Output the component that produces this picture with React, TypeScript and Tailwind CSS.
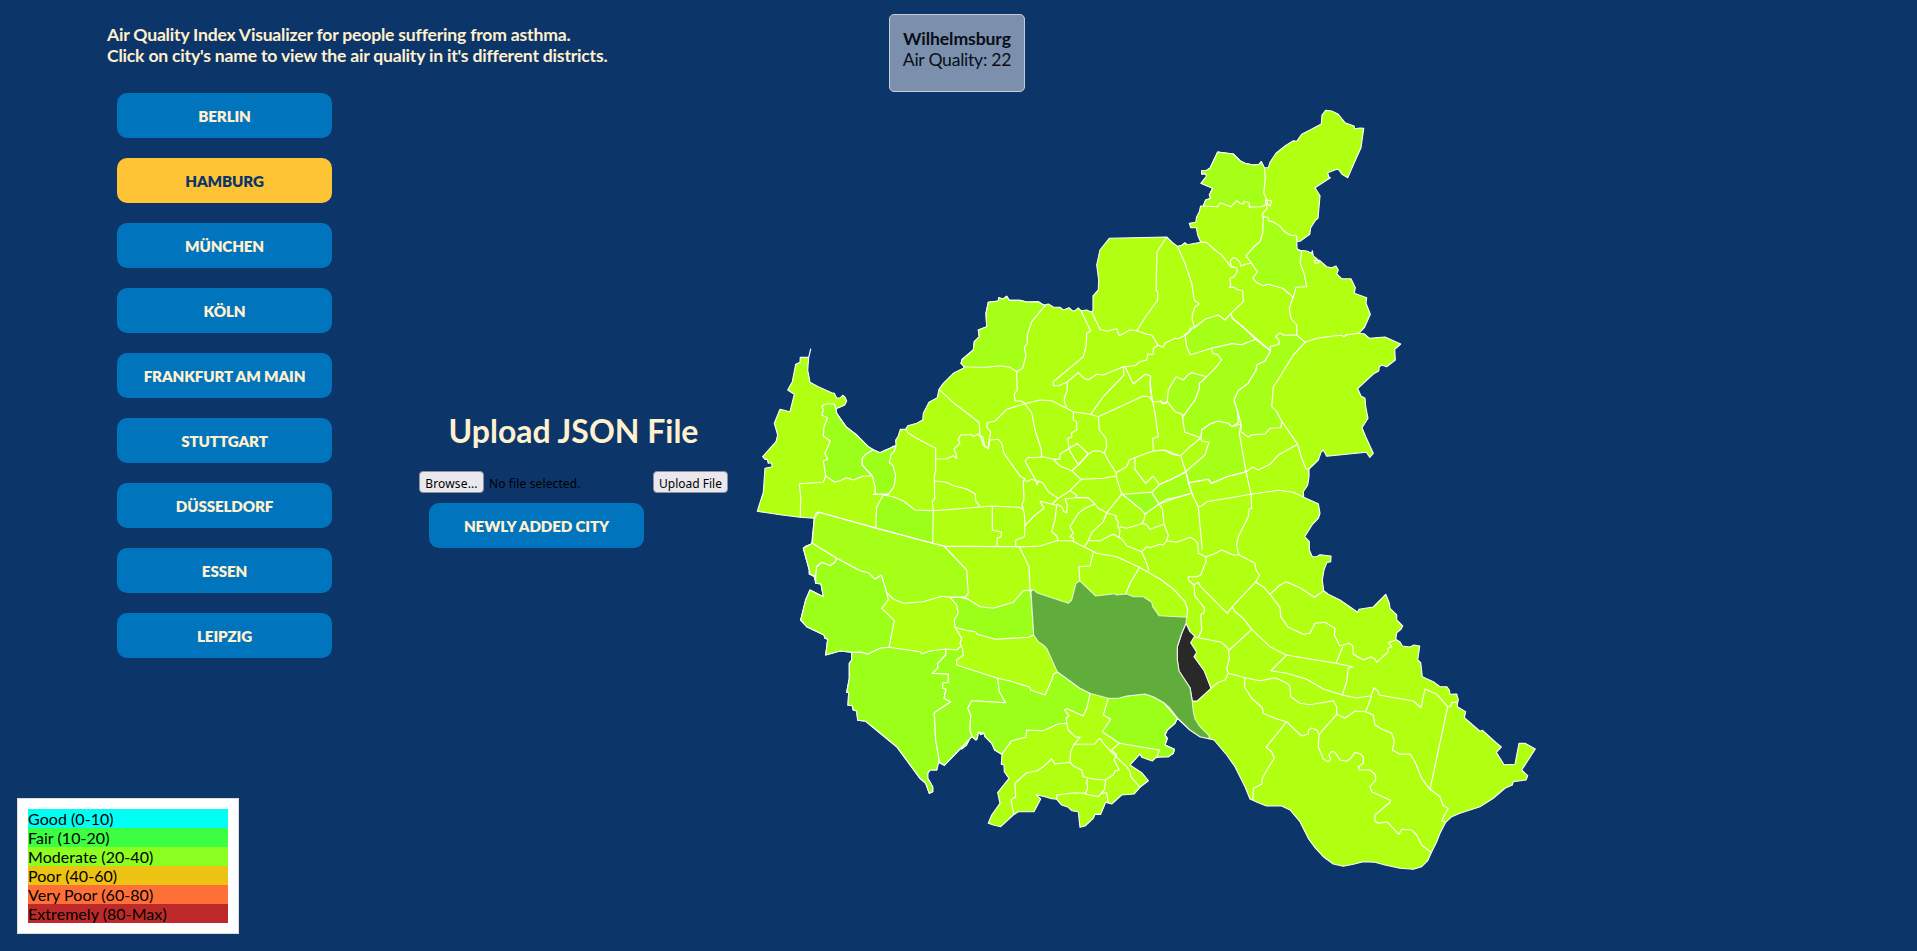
import React, { useState } from "react";

const CITIES = [
  "BERLIN",
  "HAMBURG",
  "MÜNCHEN",
  "KÖLN",
  "FRANKFURT AM MAIN",
  "STUTTGART",
  "DÜSSELDORF",
  "ESSEN",
  "LEIPZIG",
];

const LEGEND = [
  { label: "Good (0-10)", color: "bg-[#00fff2]" },
  { label: "Fair (10-20)", color: "bg-[#3cff43]" },
  { label: "Moderate (20-40)", color: "bg-[#8bff22]" },
  { label: "Poor (40-60)", color: "bg-[#ecc313]" },
  { label: "Very Poor (60-80)", color: "bg-[#ff6f38]" },
  { label: "Extremely (80-Max)", color: "bg-[#bd2a29]" },
];

type Run = [number, number, string];

// Each run holds an origin and points measured in thirds of a map unit.
const points = ([ox, oy, run]: Run) =>
  run
    .trim()
    .split(/\s+/)
    .map((pair) => {
      const [x, y] = pair.split(",").map(Number);
      return `${(ox + x / 3).toFixed(1)},${(oy + y / 3).toFixed(1)}`;
    })
    .join(" ");

const COAST: Run[] = [
  [740, 330, "206,82 212,57 206,82 203,120 210,157 235,170 275,188 283,190 290,204 300,204 308,196 315,202 320,213 314,225 303,230 288,236 290,250 300,265 318,290 335,304 350,315 365,333 385,350 400,359 420,368 435,361 450,355 462,348 468,347 467,330 475,318 481,298 498,298 503,287 530,280 548,270 550,250 567,217 592,203 597,178"],
  [920, 220, "70,490 100,460 130,445 133,440 123,430 127,418 160,390 163,365 178,350 175,330 200,320 198,280 205,247 235,243 236,233 250,237 260,229 268,241 300,241 320,246 355,245 370,256 385,252 400,261 420,262 430,270 447,263 457,272 465,272 475,264 483,272 500,270 512,275 519,272 519,228 535,210 536,180 530,135 540,90 568,55 740,51"],
  [1160, 100, "40,430 52,439 65,436 75,428 82,434 122,427 113,405 109,383 92,383 88,370 107,367 110,350 118,335 122,318 130,318 137,300 152,295 148,285 158,265 123,250 140,228 136,221 125,222 125,212 140,211 150,205 173,156 220,162 240,182 255,190 280,195 297,193 304,185 313,203 325,203 330,187 348,160 375,138 400,122 410,124 425,103 450,90 484,72 486,45 497,31 515,33 535,43 555,68 582,78 584,86 600,84 611,85 603,143 584,185 563,233 545,222 537,210 530,208 503,218 506,230 511,233 465,263 480,287 474,355 467,360 452,383 449,403 420,424 405,425 403,430 411,447 420,451 440,453 455,460 457,452 460,468 472,478 477,488 466,490 462,480 478,481 500,500 515,503 528,498 535,510 530,522 545,536 573,536 586,563 583,580 620,593 618,610 631,643 613,683 597,700"],
  [1160, 300, "612,101 628,115 675,111 722,132 704,148 706,180 680,200 665,195 658,200 656,213 640,222 593,266 603,288 615,295 617,320 624,355 606,383 617,410 640,460 629,472 619,457 500,469 490,450 483,457 475,480 447,507 447,530 443,555 430,575 431,592 475,611 480,640 475,655 458,672 434,710 448,725 448,750"],
  [1200, 540, "328,30 337,50 350,50 360,44 393,48 392,65 380,68 372,90 367,120 371,152 385,163 420,180 473,217 477,208 520,201 557,163 568,190 570,205 590,225 590,240 608,258 603,268 590,278 587,298 600,306 607,318 630,321 642,315 659,318 653,360 662,368 667,410 700,425 720,440 740,440 748,450 750,463 770,462 775,480 773,487 772,500 797,515 793,533 840,574 847,571 885,605 904,621 889,637 912,674 945,673 957,610 975,610 1006,627 965,690 983,707 978,720 940,725 937,735 915,745 880,775 840,800 780,820 755,830 737,847 720,880 710,905 693,940 683,962 665,980 640,988 600,985 555,975 525,967 490,965 460,973 430,979 400,972 370,950 345,923 325,895 300,845 270,810 245,798 200,798 175,788 150,777 135,740 105,680 80,645 42,600"],
  [960, 570, "747,506 720,500 690,480 652,445 645,460 622,480 615,495 622,505 615,525 643,538 640,550 625,560 597,560 585,565 577,573 545,562 540,552 510,585 545,608 565,632 540,652 522,672 485,675 455,702 437,697 422,733 405,733 400,745 375,768 360,772 355,725 335,722 325,712 305,705 290,688 275,686 255,680 228,674 242,687 222,725 175,725 160,735 122,770 103,766 85,760 95,735 120,700 113,668 147,625 133,605 132,585 124,583 126,553 104,540 95,520 75,500 72,490 62,494 55,486 52,505 48,510 37,500 30,505 20,525 5,537"],
  [780, 500, "540,747 493,796 480,790 472,783 470,810 450,810 443,820 443,835 458,860 458,875 448,880 437,850 420,835 350,740 257,664 233,661 230,633 220,630 217,617 204,616 206,578 200,577 208,535 208,490 215,480 215,457 180,453 137,465 143,418 135,415 132,405 80,380 62,360 77,300 90,270 130,290 123,252 107,250 103,230 88,222 88,210 70,145 78,138 95,132 103,55 60,52 0,44"],
  [740, 330, "52,544 70,487 75,415 97,410 94,398 85,400 82,388 75,388 68,380 108,335 113,315 103,280 120,238 150,245 163,193 143,180 157,155 167,103 180,97 181,82"],
];

const MID = "#a6ff17";
const LOW = "#9bff1a";

const DISTRICTS: { fill: string; run: Run }[] = [
  { fill: LOW, run: [740, 330, "245,228 260,221 283,222 288,236 290,250 318,290 350,315 385,350 400,359 375,375 367,385 367,405 385,425 397,438 370,438 340,450 320,443 300,452 283,456 257,437 250,393 263,388 255,370 271,333 250,318 252,290 262,265 257,260 246,256 250,238"] },
  { fill: LOW, run: [740, 330, "400,359 375,375 367,385 367,405 397,438 405,470 406,493 445,493 462,470 467,437 458,405 448,398 453,375 462,365 468,347 450,355 420,368"] },
  { fill: LOW, run: [740, 330, "430,495 410,530 407,595 578,640 580,542 525,540 490,513 460,500"] },
  { fill: MID, run: [920, 220, "375,257 335,305 322,345 322,370 313,382 318,405 308,445 290,455 270,442 240,437 200,442 150,441 133,440 123,430 127,418 160,390 163,365 178,350 175,330 200,320 198,280 205,247 235,243 236,233 250,237 260,229 268,241 300,241 320,246 355,245"] },
  { fill: MID, run: [1160, 100, "130,318 137,300 152,295 148,285 158,265 123,250 140,228 136,221 125,222 125,212 140,211 150,205 173,156 220,162 240,182 255,190 280,195 297,193 304,185 313,203 316,235 311,280 322,302 322,312 305,320 268,322 268,308 252,304 250,312 240,310 230,302 213,320 180,308 173,320"] },
  { fill: MID, run: [1160, 100, "310,350 325,352 325,362 340,366 360,378 370,392 390,405 410,408 411,447 425,455 420,490 432,520 440,560 408,562 400,592 368,565 325,553 310,557 290,548 279,535 292,515 275,490 258,468 285,437 300,425 308,400"] },
  { fill: MID, run: [1160, 300, "75,103 88,97 90,85 103,83 135,58 175,45 195,60 213,40 217,55 250,82 287,118 245,134 215,131 155,145 91,164 80,140"] },
  { fill: MID, run: [1160, 300, "155,145 215,131 245,134 287,118 332,153 315,183 290,195 288,212 270,240 265,250 235,272 222,300 232,330 235,368 215,380 205,370 175,364 150,372 125,390 123,413 75,397 70,370 68,350 105,300 118,265 118,250 140,230 165,205 185,180 175,165 158,160"] },
  { fill: MID, run: [1160, 300, "332,153 330,140 357,133 357,120 347,110 360,98 372,106 410,105 435,127 400,165 340,262 335,320 350,335 366,365 362,383 330,385 315,402 275,404 265,412 243,395 243,372 232,330 222,300 235,272 265,250 270,240 288,212 290,195 315,183"] },
  { fill: MID, run: [1160, 300, "140,230 95,218 85,224 70,240 48,230 25,270 22,305 45,335 65,342 68,350 105,300 118,265 118,250"] },
  { fill: MID, run: [1160, 300, "123,413 125,390 150,372 175,364 205,370 215,380 243,372 238,400 258,515 200,530 155,550 145,538 85,548 77,515 100,495 135,465 147,427 125,423"] },
  { fill: LOW, run: [960, 380, "487,343 575,337 597,372 555,402 545,390"] },
  { fill: MID, run: [960, 380, "575,337 600,313 655,288 678,275 695,340 650,353 597,372"] },
  { fill: MID, run: [780, 500, "117,37 457,130 492,138 560,210 565,280 555,292 510,292 485,289 430,305 370,310 340,297 320,278 304,226 285,238 265,218 240,212 170,175 97,130 103,55"] },
  { fill: MID, run: [780, 500, "97,130 170,175 165,187 150,197 125,187 110,200 107,228 88,222 88,210 70,145"] },
  { fill: LOW, run: [780, 500, "170,175 240,212 265,218 285,238 304,226 320,278 325,300 305,325 343,362 327,442 300,445 263,463 245,457 215,457 180,453 137,465 143,418 135,415 132,405 80,380 62,360 77,300 90,270 130,290 123,252 107,250 107,228 110,200 125,187 150,197 165,187"] },
  { fill: LOW, run: [780, 500, "215,457 245,457 263,463 300,445 327,442 420,455 425,462 450,453 497,447 497,465 473,490 473,505 457,520 505,522 505,547 488,550 488,565 498,567 492,595 512,605 463,638 467,720 478,780 470,810 450,810 443,820 443,835 458,860 458,875 448,880 437,850 420,835 350,740 257,664 233,661 230,633 220,630 217,617 204,616 206,578 200,577 208,535 208,490 215,480"] },
  { fill: LOW, run: [780, 500, "497,447 530,450 542,438 547,445 550,465 530,480 530,495 653,535 660,575 677,608 575,602 563,625 572,645 570,690 576,710 540,747 493,796 478,785 467,720 463,638 512,605 492,595 498,567 488,565 488,550 505,547 505,522 457,520 473,505 473,490 497,465"] },
  { fill: LOW, run: [780, 500, "510,292 555,292 600,320 640,325 700,307 730,272 755,270 756,330 762,405 745,412 645,418 590,402 588,396 555,390 525,382 523,360 535,340 530,315"] },
  { fill: LOW, run: [960, 570, "292,305 360,355 390,370 382,410 370,438 322,416 313,420 327,437 318,445 320,460 295,462 250,482 200,480 197,502 155,512 125,553 104,540 95,520 75,500 72,490 55,486 52,505 48,510 37,500 30,480 32,435 23,415 35,392 137,398 118,365 113,325 150,333 210,352 212,360 255,375 275,330 280,313"] },
  { fill: LOW, run: [960, 570, "445,385 500,378 555,372 580,380 610,397 652,445 645,460 622,480 615,495 622,505 615,525 643,538 640,550 625,560 590,562 598,540 478,520 427,485 452,448 430,435"] },
];

const BORDERS: Run[] = [
  [740, 330, "257,437 250,457 178,461 182,500 181,560"],
  [740, 330, "222,565 228,550 235,546 407,595 578,640 615,649 660,649"],
  [740, 330, "498,292 503,308 530,325 587,355 587,420 583,440 584,505 577,515 580,542 660,536"],
  [740, 330, "587,387 620,386 640,377 650,385 648,372 642,357 660,340 655,330 662,314 695,314 700,320 715,312 720,320"],
  [740, 330, "597,178 640,218 680,248 718,278 720,315 730,345 745,357 747,330"],
  [740, 330, "585,453 620,457 640,467 680,477 706,492 708,515 720,529"],
  [740, 330, "398,493 430,493 445,493"],
  [920, 220, "290,455 290,475 292,510 283,522 285,543 303,543 318,552"],
  [920, 220, "483,272 512,333 500,340 498,380 490,410 400,485 400,497 415,497 440,487 475,458 490,473 505,480 530,463 550,465 610,440 645,437 660,425 680,420 683,402 700,403 700,385 715,375"],
  [920, 220, "515,276 540,328 560,334 590,326 598,347 630,330 650,332"],
  [920, 220, "740,51 711,95 708,210 713,215 713,240 680,285 650,332 680,343 695,345 700,352 713,375 730,382 735,370 765,355 775,356 797,345 820,322"],
  [920, 220, "442,487 442,510 433,535 433,545 440,562"],
  [920, 220, "610,440 612,465 550,530 512,583"],
  [920, 220, "615,440 640,492 675,463 692,468 690,500 697,540"],
  [920, 220, "772,79 795,130 815,190 823,240 838,252 825,260 817,285 817,300 824,324"],
  [1160, 100, "322,312 330,318 335,302 316,300 322,325 308,340 308,352"],
  [1160, 100, "122,427 140,427 165,450 185,465 212,500 222,500"],
  [1160, 100, "215,497 210,485 218,473 228,475 240,487 242,499 255,493 275,490"],
  [1160, 100, "212,500 230,503 232,515 222,530 210,535 212,555 208,562 222,562 230,568 248,572 250,605 213,640"],
  [1160, 100, "213,640 217,655 250,682 332,753"],
  [1160, 100, "400,590 388,625 393,655 410,675 410,705"],
  [1160, 100, "435,727 470,715 520,708 545,706 552,710 560,704 597,700"],
  [1160, 300, "366,365 413,433 425,475 437,505 447,510"],
  [1160, 300, "258,515 273,583 275,625 267,627 265,650 235,710 230,735 233,750"],
  [1160, 300, "0,300 5,310 22,305"],
  [1160, 300, "123,413 90,440 62,467"],
  [1160, 300, "77,515 30,540 0,552"],
  [1160, 300, "0,450 20,453 35,463 62,467 77,515 85,548 100,590 115,620 127,750"],
  [1160, 300, "85,548 145,538 155,550 200,530 258,515 278,502 295,510 330,493 355,465 413,433"],
  [1160, 300, "115,620 125,618 140,605 273,583 355,571 400,577 431,592"],
  [1160, 300, "95,580 50,592 20,598 0,610"],
  [960, 380, "87,180 92,155 80,142 82,128 105,123 140,88 200,70 240,60 275,62 340,95 390,103 415,110 550,48 568,50 578,65"],
  [960, 380, "58,165 68,170 75,200 85,205 90,180 115,178 125,190 132,220 180,288 195,297 190,302"],
  [960, 380, "195,72 215,98 225,150 243,205 245,230"],
  [960, 380, "195,243 205,232 225,233 250,230 280,238 300,238 300,222 325,207 352,190 385,222 355,255"],
  [960, 380, "340,95 340,120 350,125 350,150 335,158 335,172 323,175 328,210 355,255"],
  [960, 380, "280,238 300,258 335,272 355,255 385,222 400,213 420,213 433,220"],
  [960, 380, "415,108 418,150 438,175 440,200 433,220 450,250 468,278 470,295 485,343 440,398"],
  [960, 380, "335,272 363,298 430,295 468,288"],
  [960, 380, "195,243 227,300 232,315 235,303 250,310 265,335 295,355"],
  [960, 380, "363,298 330,332 295,355 275,373 240,363 252,385 225,405 195,437"],
  [960, 380, "190,302 205,303 215,298 230,303"],
  [960, 380, "190,302 192,360 186,375 193,400 195,437 193,470 167,480 167,500"],
  [960, 380, "0,386 50,382 100,378 175,382 188,388"],
  [960, 380, "97,382 97,450 125,457 122,470 112,475 110,500"],
  [960, 380, "330,332 350,345 348,352 385,353"],
  [960, 380, "275,373 290,376 285,420 275,455 290,468 295,482"],
  [960, 380, "290,372 305,380 312,395 320,398 322,375 315,357 345,353 385,353 405,372 415,385 440,398 470,408 467,415 475,425 473,440 480,450 478,472"],
  [960, 380, "405,372 375,385 355,400 330,440 340,460 330,470 340,473 340,485"],
  [960, 380, "440,398 430,425 395,458 385,482"],
  [960, 380, "0,499 200,500 240,498 290,482 335,482 372,500 410,520 470,530 535,560 600,597 640,627 675,665 683,690 680,712"],
  [960, 380, "372,502 385,482 420,482 460,463 485,477 500,497 545,515"],
  [960, 380, "478,440 500,445 550,430 560,435 570,448 612,433"],
  [960, 380, "545,515 560,550 567,572"],
  [960, 380, "545,515 560,500 570,503 600,493 610,495 620,482 625,465 612,433 607,385 597,372"],
  [960, 380, "555,402 552,420 545,430"],
  [960, 380, "468,278 500,260 508,240 545,225 580,213 615,210 660,228"],
  [960, 380, "525,235 525,268 557,310 580,288 597,313"],
  [960, 380, "570,0 575,50 585,100 595,170 578,175 580,212"],
  [960, 380, "578,65 605,65 610,72 622,68"],
  [960, 380, "620,482 650,487 690,472 705,480 713,490 715,520 738,530 738,545 722,585 710,590 685,590 685,600 702,615 705,650 715,660 733,683 733,697 722,705 725,750 715,773"],
  [960, 380, "702,615 715,607 722,620 802,700"],
  [960, 380, "178,500 207,560 210,630 215,660"],
  [960, 380, "400,517 390,558 357,560 359,603"],
  [960, 380, "540,560 510,610 498,640 497,652"],
  [960, 570, "704,200 715,203 785,217 805,237 808,265 800,297 805,310 795,330 775,337 753,355"],
  [960, 570, "697,395 712,393"],
  [960, 570, "320,460 325,480 345,500 360,502 342,523 332,545 330,577"],
  [960, 570, "342,523 405,522 413,510 420,505 430,520 470,562 500,590 510,605 512,620 540,652"],
  [960, 570, "478,520 455,540 470,555 462,570 478,600 465,602 460,615 435,630 400,627 370,620 365,600 340,588 330,577"],
  [960, 570, "437,628 433,660 415,680 375,672 383,655 380,635 383,625"],
  [960, 570, "415,680 425,670 440,668 445,700"],
  [960, 570, "330,577 285,582 275,567 250,590 230,603 200,608 165,640 167,680 153,690 162,735"],
  [960, 570, "290,688 290,675 345,668 375,670"],
  [960, 570, "652,445 748,505"],
  [780, 500, "540,292 560,297 550,290"],
  [780, 500, "525,382 545,415 540,430 545,437"],
  [1200, 540, "18,50 40,43 65,30 100,45 118,45 165,70 168,90 178,105 168,125 97,200 82,220"],
  [1200, 540, "112,30 118,45"],
  [1200, 540, "165,125 190,140 210,163 240,202 242,230 265,262 310,283 330,280 345,250 375,247 405,265 403,285 420,318 447,310 458,318 460,343 490,360 512,350 525,357 530,367 565,335 563,325 575,320 565,308 587,300"],
  [1200, 540, "210,163 240,135 258,125 300,143 343,172 371,152"],
  [1200, 540, "97,200 105,215 130,235 155,268 210,320 258,345 408,370 458,380 445,385 440,425 427,465"],
  [1200, 540, "428,320 408,370"],
  [1200, 540, "260,345 213,392 260,400 320,418 370,447 427,465 470,474 513,467 522,443 535,455 537,465 640,483 663,503 675,447 710,463 743,500 690,748"],
  [1200, 540, "743,500 750,500 757,487 773,487"],
  [1200, 540, "85,400 135,413 180,422 225,413 262,430 270,440 272,470 300,490 330,494 400,482 410,500 410,523 435,535 465,513 497,515 520,525 525,555 545,567 575,580 583,605 577,630 600,643 630,642 645,665 665,715 690,748 720,770 730,797 745,805 735,822 725,843 737,847"],
  [1200, 540, "515,467 497,515"],
  [1200, 540, "410,523 357,583"],
  [1200, 540, "135,413 133,440 155,475 187,503 190,520 230,537 260,545 285,570 305,588 325,583 325,570 335,564 350,570 357,583 355,620 370,657 385,665 392,658 387,645 395,634 405,637 420,660 440,664 452,655 465,637 480,641 490,650 490,670 475,680 478,690 510,690 527,705 527,720 510,740 515,755 570,780 570,787 525,825 525,843 535,850 560,845 597,883 605,868 635,870 650,885 665,915 693,937"],
  [1200, 540, "260,545 198,622 215,635 223,655 205,683 187,715 185,733 160,745 159,780"],
  [1200, 540, "155,268 88,330"],
];

const HIGHLIGHT: Run = [960, 570, "213,65 220,58 230,68 325,100 335,90 348,40 360,33 407,78 465,71 470,75 500,72 520,80 550,80 575,97 578,110 597,137 680,142 678,160 665,190 652,230 652,270 657,303 690,353 697,395 700,425 705,447 720,470 747,497 747,506 720,500 690,480 652,443 630,415 610,397 580,380 555,372 500,378 475,385 445,385 390,370 360,355 292,305 260,235 250,225 235,215 221,195"];
const NO_DATA: Run = [960, 570, "678,160 690,185 704,198 692,218 710,247 702,260 733,303 753,355 712,393 697,393 690,353 657,303 652,270 652,230 665,190"];

function DistrictMap() {
  return (
    <svg
      width="795"
      height="785"
      viewBox="750 100 795 785"
      stroke="#ffffff"
      strokeWidth="1.15"
      strokeLinejoin="round"
      fill="none"
      className="block"
    >
      <polygon points={COAST.map(points).join(" ")} fill="#b1ff11" />
      {DISTRICTS.map((d, i) => (
        <polygon key={i} points={points(d.run)} fill={d.fill} />
      ))}
      {BORDERS.map((run, i) => (
        <polyline key={i} points={points(run)} />
      ))}
      <polygon points={points(NO_DATA)} fill="#292929" />
      <polygon points={points(HIGHLIGHT)} fill="#61ad3c" strokeOpacity="0.75" />
    </svg>
  );
}

function CityButton({
  label,
  active = false,
  onClick,
}: {
  label: string;
  active?: boolean;
  onClick?: () => void;
}) {
  return (
    <button
      onClick={onClick}
      className={`h-[45px] w-[215px] rounded-[10px] pt-[2px] text-[15.2px] font-extrabold tracking-[-0.15px] ${
        active ? "bg-[#ffc436] text-[#0c356a]" : "bg-[#0174be] text-[#fff0ce]"
      }`}
    >
      {label}
    </button>
  );
}

export default function App() {
  const [city, setCity] = useState("HAMBURG");

  return (
    <div className="relative flex h-[951px] w-full overflow-hidden bg-[#0c356a] font-['Lato',sans-serif] text-black">
      <aside className="w-[750px] shrink-0 pt-6">
        <h1 className="ml-[107px] text-[17.6px] leading-[21px] font-bold tracking-[-0.21px] whitespace-nowrap text-[#fff0ce] [font-variant-ligatures:none]">
          Air Quality Index Visualizer for people suffering from asthma.
          <br />
          Click on city's name to view the air quality in it's different districts.
        </h1>
        <div className="mt-[27px] flex">
          <nav className="ml-[117px] flex flex-col gap-5">
            {CITIES.map((name) => (
              <CityButton
                key={name}
                label={name}
                active={name === city}
                onClick={() => setCity(name)}
              />
            ))}
          </nav>
          <section className="mt-[318px] ml-[87px] w-[309px]">
            <h2 className="text-center text-[32px] leading-[40px] font-bold text-[#fff0ce]">
              Upload JSON File
            </h2>
            <div className="mt-5 flex items-center font-['Noto_Sans',sans-serif] text-xs">
              <button className="h-[22px] w-[65px] rounded-[4px] border border-[#8f8f9d] bg-[#e9e9ed] pt-[3px] tracking-[0.15px]">
                Browse...
              </button>
              <span className="ml-[5px] pt-[3px] tracking-[0.12px]">No file selected.</span>
              <button className="ml-auto h-[22px] w-[75px] rounded-[4px] border border-[#8f8f9d] bg-[#e9e9ed] pt-[3px]">
                Upload File
              </button>
            </div>
            <div className="mt-[10px] ml-[10px]">
              <CityButton label="NEWLY ADDED CITY" />
            </div>
          </section>
        </div>
      </aside>

      <main className="pt-[100px]">
        <DistrictMap />
      </main>

      <div className="absolute top-[14px] left-[889px] h-[78px] w-[136px] rounded-[5px] border border-[#c4ccd9] bg-[#7c90ad] pt-[13px] text-center text-[17.6px] leading-[21px] text-[#080e18]">
        <strong className="block font-bold tracking-[-0.1px]">Wilhelmsburg</strong>
        <span className="tracking-[-0.25px]">Air Quality: 22</span>
      </div>

      <ul className="absolute top-[798px] left-[17px] w-[222px] border border-[#dddddd] bg-white p-[10px]">
        {LEGEND.map((row) => (
          <li key={row.label} className={`h-[19px] text-base leading-[19px] tracking-[0.05px] ${row.color}`}>
            {row.label}
          </li>
        ))}
      </ul>
    </div>
  );
}
